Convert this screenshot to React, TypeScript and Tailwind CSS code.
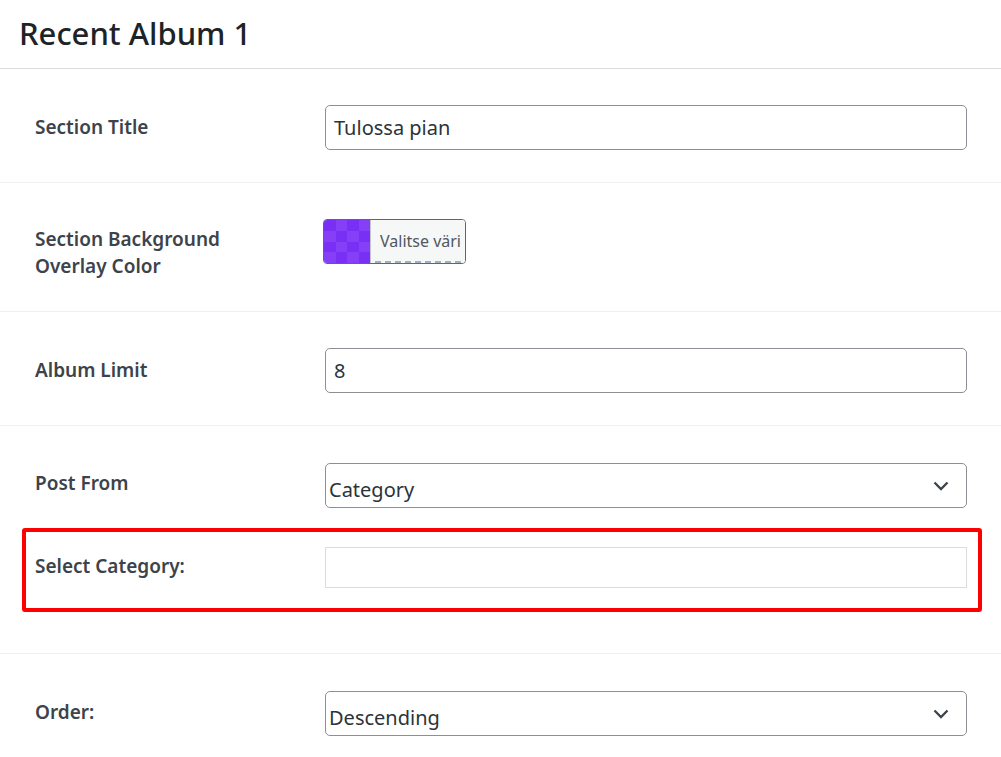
import React from "react";

const font = { fontFamily: '"Noto Sans", "Open Sans", sans-serif' };

const Chevron = () => (
  <svg width="16" height="10" viewBox="0 0 16 10" className="absolute right-[17px] top-1/2 -translate-y-1/2">
    <polyline points="1.5,1.5 8,8 14.5,1.5" fill="none" stroke="#3c434a" strokeWidth="2.3" />
  </svg>
);

const TextBox = ({ value }: { value: string }) => (
  <div className="w-[642px] h-[45px] rounded-[5px] border border-[#8c8f94] bg-white flex items-center px-[8px] text-[20px] text-[#2c3338]">
    {value}
  </div>
);

const SelectBox = ({ value }: { value: string }) => (
  <div className="relative w-[642px] h-[45px] rounded-[5px] border border-[#8c8f94] bg-white flex items-center pl-[3px] pt-[8px] text-[20px] text-[#2c3338]">
    {value}
    <Chevron />
  </div>
);

const Label = ({ children }: { children: React.ReactNode }) => (
  <div className="w-[290px] shrink-0 text-[19px] font-semibold leading-[27px] text-[#3c434a]">{children}</div>
);

const ColorButton = () => {
  const cells = Array.from({ length: 16 }, (_, i) => i);
  return (
    <div className="flex w-[143px] h-[45px] rounded-[4px] border border-[#50698a] overflow-hidden -ml-[2px]">
      <div className="grid grid-cols-4 grid-rows-4 w-[46px] h-full">
        {cells.map((i) => (
          <div key={i} className={(Math.floor(i / 4) + i) % 2 === 0 ? "bg-[#7a2ff5]" : "bg-[#8540f7]"} />
        ))}
      </div>
      <div className="flex-1 bg-[#f6f7f7] border-l border-[#c3c4c7] flex flex-col">
        <div className="flex-1 flex items-center pl-[9px] text-[16px] text-[#50575e]">Valitse väri</div>
        <div className="h-[2px] mx-[4px] border-b-2 border-dashed border-[#9fb3c8]" />
      </div>
    </div>
  );
};

export default function App() {
  return (
    <div className="w-[1001px] h-[757px] bg-white overflow-hidden" style={font}>
      <div className="h-[69px] border-b border-[#dcdcde] pl-[19px] pt-[9px]">
        <h1 className="text-[31px] leading-[48px] font-medium text-[#1d2327]">Recent Album 1</h1>
      </div>

      <div className="flex items-center pl-[35px] pt-[36px] pb-[32px] border-b border-[#f0f0f1]">
        <Label>Section Title</Label>
        <TextBox value="Tulossa pian" />
      </div>

      <div className="flex items-start pl-[35px] pt-[36px] pb-[31px] border-b border-[#f0f0f1]">
        <div className="pt-[7px]">
          <Label>
            Section Background
            <br />
            Overlay Color
          </Label>
        </div>
        <ColorButton />
      </div>

      <div className="flex items-center pl-[35px] pt-[36px] pb-[32px] border-b border-[#f0f0f1]">
        <Label>Album Limit</Label>
        <TextBox value="8" />
      </div>

      <div className="pt-[37px] pb-[41px] border-b border-[#f0f0f1]">
        <div className="flex items-start pl-[35px]">
          <div className="pt-[7px]">
            <Label>Post From</Label>
          </div>
          <SelectBox value="Category" />
        </div>
        <div className="mx-[22px] mt-[20px] w-[960px] h-[84px] border-[4px] border-[#f00] rounded-[3px] flex items-start pl-[9px] pt-[15px]">
          <div className="pt-[6px]">
            <Label>Select Category:</Label>
          </div>
          <div className="w-[642px] h-[41px] border border-[#dcdcde] bg-white" />
        </div>
      </div>

      <div className="flex items-start pl-[35px] pt-[37px]">
        <div className="pt-[8px]">
          <Label>Order:</Label>
        </div>
        <SelectBox value="Descending" />
      </div>
    </div>
  );
}
